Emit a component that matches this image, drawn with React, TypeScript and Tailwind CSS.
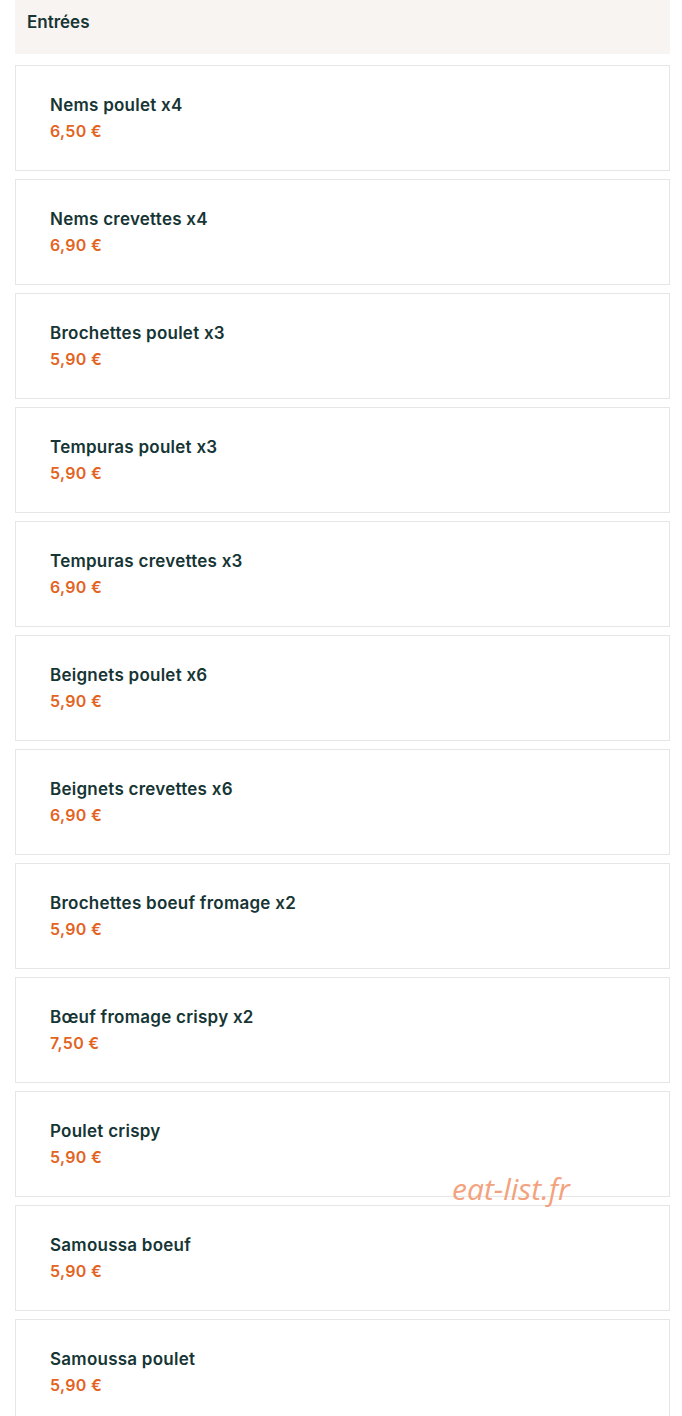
const items = [
  { name: 'Nems poulet x4', price: '6,50 €' },
  { name: 'Nems crevettes x4', price: '6,90 €' },
  { name: 'Brochettes poulet x3', price: '5,90 €' },
  { name: 'Tempuras poulet x3', price: '5,90 €' },
  { name: 'Tempuras crevettes x3', price: '6,90 €' },
  { name: 'Beignets poulet x6', price: '5,90 €' },
  { name: 'Beignets crevettes x6', price: '6,90 €' },
  { name: 'Brochettes boeuf fromage x2', price: '5,90 €' },
  { name: 'Bœuf fromage crispy x2', price: '7,50 €' },
  { name: 'Poulet crispy', price: '5,90 €' },
  { name: 'Samoussa boeuf', price: '5,90 €' },
  { name: 'Samoussa poulet', price: '5,90 €' },
];

export default function App() {
  return (
    <div className="relative min-h-screen bg-white font-['Inter',sans-serif]">
      <div className="ml-[15px] w-[655px]">
        <div className="h-[54px] bg-[#f8f4f1] px-[12px] pt-[10px]">
          <h2 className="text-[17px] font-semibold text-[#163534]">Entrées</h2>
        </div>
        <div className="flex flex-col gap-[8px] pt-[11px]">
          {items.map(item => (
            <div key={item.name} className="h-[106px] border border-[#e6e6e6] bg-white pl-[34px] pt-[28px]">
              <div className="text-[17px] font-semibold leading-[22px] tracking-[0.25px] text-[#163534]">{item.name}</div>
              <div className="mt-[4px] text-[16px] font-semibold leading-[22px] tracking-[0.3px] text-[#e3641f]">{item.price}</div>
            </div>
          ))}
        </div>
      </div>
      <div className="absolute left-[452px] top-[1166px] font-['Open_Sans',sans-serif] text-[30px] italic text-[#f3a27d]">
        eat-list.fr
      </div>
    </div>
  );
}
